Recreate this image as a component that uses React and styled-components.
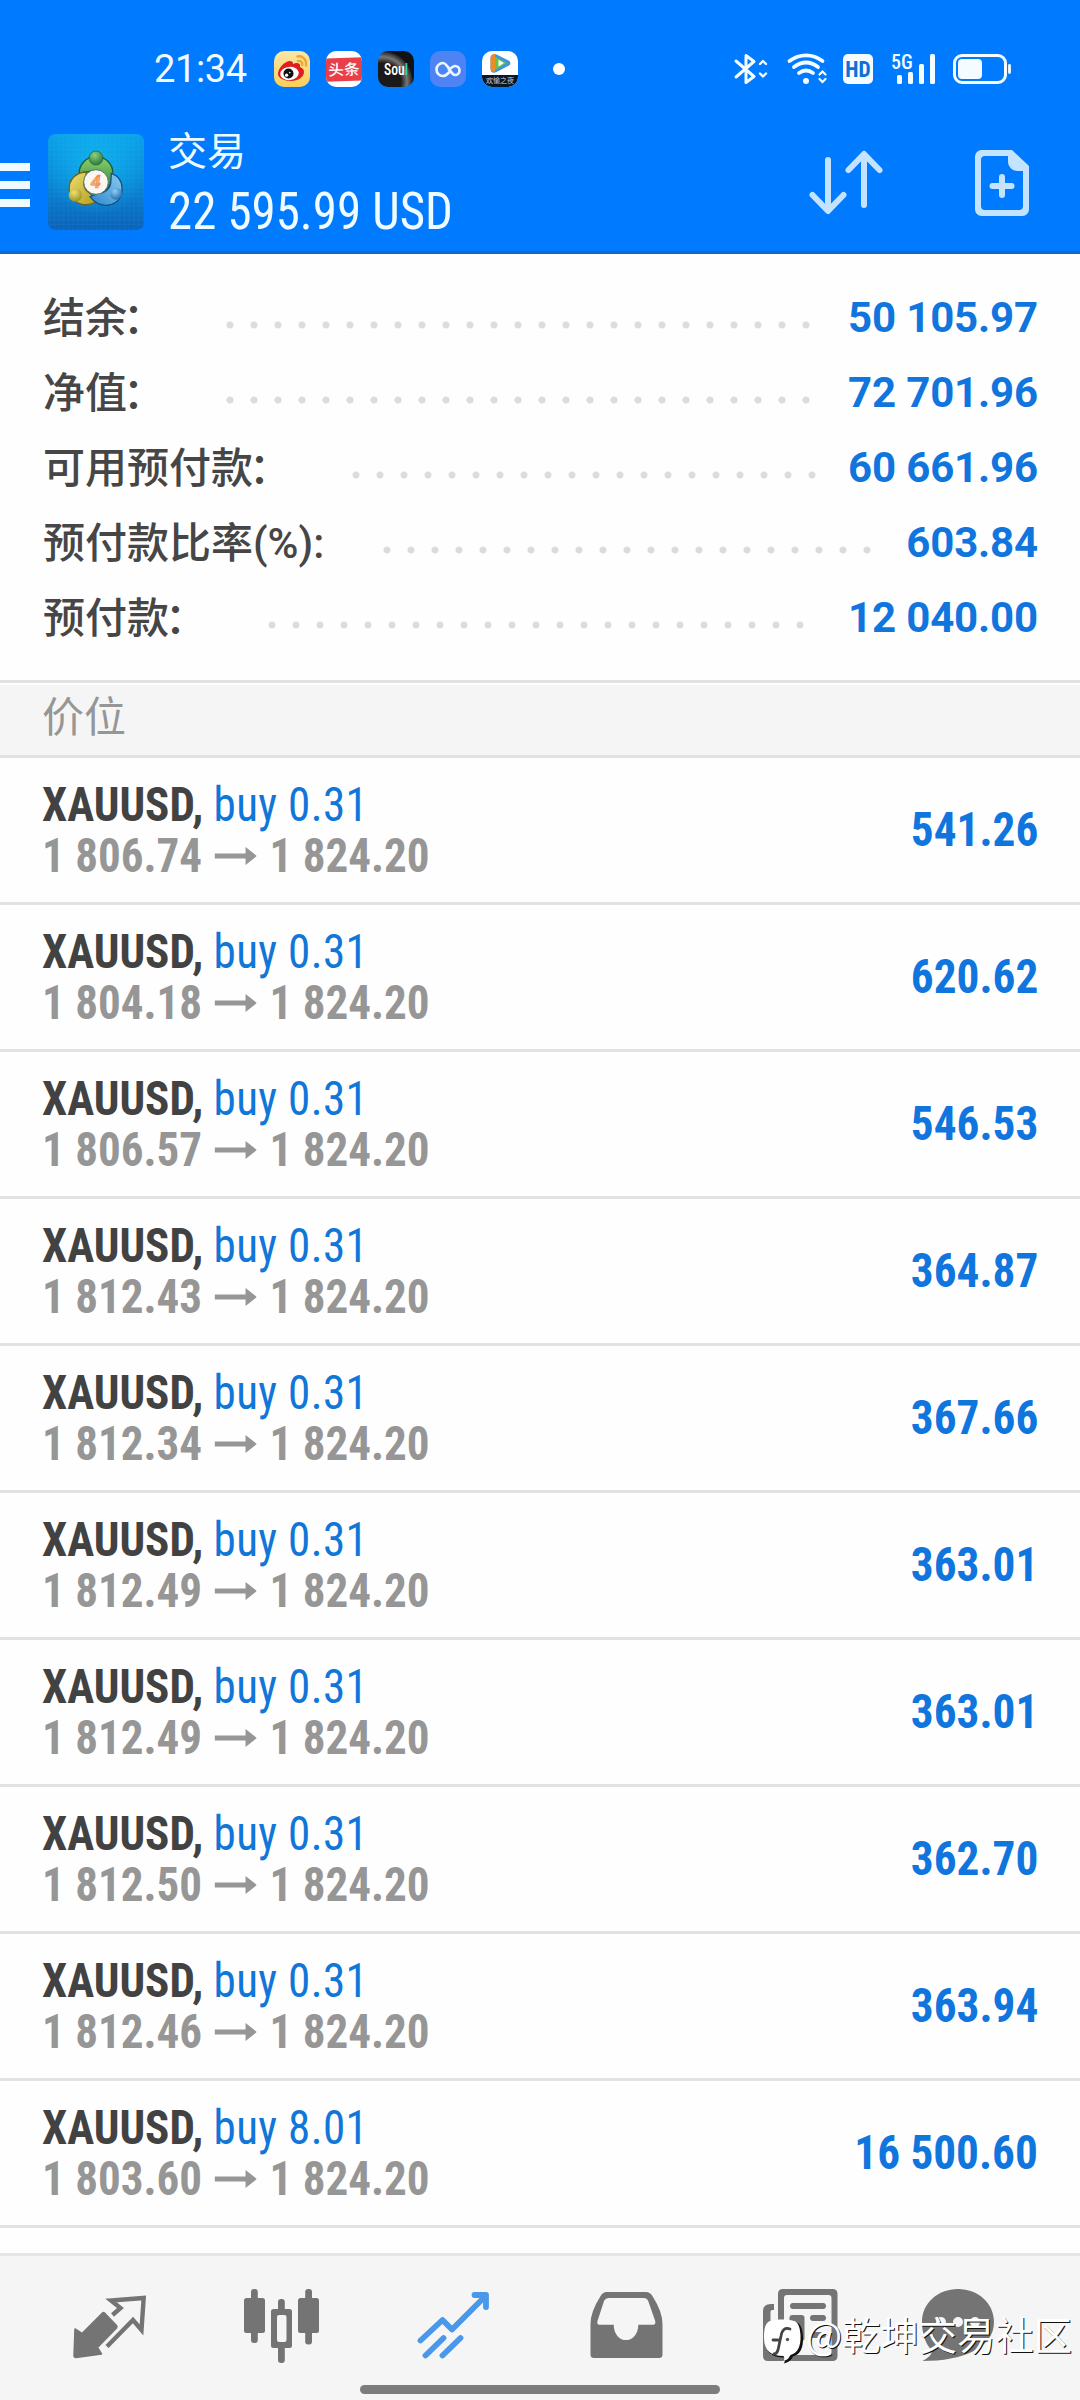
import React from "react";
import styled, { createGlobalStyle } from "styled-components";

const GlobalStyle = createGlobalStyle`
  body { margin: 0; background: #fefefe; font-family: Roboto, "Noto Sans CJK SC", sans-serif; }
  svg { display: block; flex: none; }
`;

const Screen = styled.div`
  position: relative;
  width: 1080px;
  height: 2400px;
  display: flex;
  flex-direction: column;
  overflow: hidden;
  background: #fefefe;
`;

/* ---------- header ---------- */

const Header = styled.header`
  box-sizing: border-box;
  height: 254px;
  flex: none;
  background: #007aff;
  border-bottom: 3px solid #0c69d3;
  color: #f0fbff;
`;

const StatusBar = styled.div`
  box-sizing: border-box;
  height: 121px;
  padding: 45px 68px 28px 154px;
  display: flex;
  align-items: center;
`;

const Clock = styled.div`
  width: 120px;
  font-size: 38px;
  line-height: 48px;
  letter-spacing: -0.4px;
`;

const AppIcons = styled.div`
  display: flex;
  align-items: center;
  gap: 16px;
`;

const AppIcon = styled.div`
  width: 36px;
  height: 36px;
  border-radius: 10px;
  overflow: hidden;
  background: ${(p) => p.$bg};
  display: flex;
  flex-direction: column;
  align-items: center;
  justify-content: ${(p) => p.$justify || "center"};
`;

const HeadlineBand = styled.div`
  width: 36px;
  height: 23px;
  background: #e8404a;
  color: #fff;
  font: 500 15px/21px "Noto Sans CJK SC", sans-serif;
  text-align: center;
  white-space: nowrap;
  transform: rotate(-2deg) scaleX(1.04);
`;

const SoulText = styled.div`
  font-size: 17px;
  line-height: 36px;
  font-weight: 500;
  font-stretch: 75%;
  color: #fff;
  white-space: nowrap;
  transform: scaleX(0.8);
  span { color: #35d6b4; }
`;

const VideoLabel = styled.div`
  width: 36px;
  height: 12px;
  background: #0b1626;
  color: #c9ced6;
  font: 400 7px/11px "Noto Sans CJK SC", sans-serif;
  text-align: center;
`;

const MoreDot = styled.div`
  width: 12px;
  height: 12px;
  margin-left: 35px;
  border-radius: 50%;
  background: #fff;
`;

const StatusIcons = styled.div`
  margin-left: auto;
  height: 36px;
  display: flex;
`;

const AppBar = styled.div`
  height: 120px;
  padding-top: 1px;
  display: flex;
  align-items: center;
`;

const MenuButton = styled.div`
  width: 48px;
  height: 44px;
  margin-top: 5px;
  display: flex;
  flex-direction: column;
  justify-content: space-between;
`;

const MenuBar = styled.div`
  width: 30px;
  height: 8px;
  background: #f0fbff;
`;

const TitleBlock = styled.div`
  width: 582px;
  margin-left: 24px;
`;

const PageName = styled.div`
  font-size: 39px;
  line-height: 60px;
`;

const Equity = styled.div`
  font-size: 52px;
  line-height: 60px;
  font-stretch: 75%;
  white-space: nowrap;
  transform: scaleX(0.94);
  transform-origin: left;
`;

/* ---------- account summary ---------- */

const Summary = styled.section`
  box-sizing: border-box;
  height: 426px;
  flex: none;
  padding: 26px 42px 0 43px;
`;

const SummaryRow = styled.div`
  height: 75px;
  display: flex;
  align-items: center;
`;

const SummaryLabel = styled.div`
  font-size: 42px;
  line-height: 75px;
  font-weight: 500;
  color: #464646;
  padding-top: 2px;
`;

const WideColon = styled.span`
  margin: 0 4px 0 -4px;
`;

const Leader = styled.div`
  width: ${(p) => p.$dots * 24}px;
  height: 8px;
  margin: 15px 0 0 ${(p) => p.$gap || 49}px;
  background: radial-gradient(circle at center, #dcdcdc 3px, transparent 4px) repeat-x left center / 24px 8px;
`;

const SummaryValue = styled.div`
  margin-left: auto;
  font-size: 42px;
  line-height: 75px;
  font-weight: 700;
  letter-spacing: -0.15px;
  color: #1076de;
`;

/* ---------- positions ---------- */

const SectionTitle = styled.div`
  box-sizing: border-box;
  height: 78px;
  flex: none;
  padding-left: 42px;
  border-top: 3px solid #e2e2e2;
  border-bottom: 3px solid #e2e2e2;
  background: #f5f5f5;
  box-shadow: inset 0 2px 0 #fefefe;
  font-size: 42px;
  line-height: 69px;
  color: #969696;
`;

const PositionList = styled.div`
  flex: 1;
`;

const PositionRow = styled.div`
  box-sizing: border-box;
  height: 147px;
  padding: 0 42px;
  border-bottom: 3px solid #e2e2e2;
  display: flex;
  align-items: center;
  justify-content: space-between;
  font-size: 48px;
  line-height: 51px;
  font-weight: 700;
  font-stretch: 75%;
  white-space: nowrap;
`;

const Deal = styled.div`
  transform: scaleX(0.938);
  transform-origin: left;
`;

const DealName = styled.div`
  color: #424242;
`;

const DealSide = styled.span`
  font-weight: 400;
  letter-spacing: 0.4px;
  color: #1076d8;
`;

const DealPrices = styled.div`
  display: flex;
  align-items: center;
  color: #969696;
`;

const Profit = styled.div`
  padding-bottom: 2px;
  color: #1076de;
  transform: scaleX(0.942);
  transform-origin: right;
`;

/* ---------- bottom bar ---------- */

const TabBar = styled.nav`
  box-sizing: border-box;
  height: 147px;
  flex: none;
  padding-left: 24px;
  border-top: 3px solid #e5e5e5;
  background: #f5f5f5;
  display: flex;
`;

const HomeIndicator = styled.div`
  position: absolute;
  left: 360px;
  bottom: 6px;
  width: 360px;
  height: 9px;
  border-radius: 5px;
  background: #7c7c7c;
`;

const Watermark = styled.div`
  position: absolute;
  left: 762px;
  top: 2311px;
  display: flex;
  align-items: flex-start;
`;

const WatermarkText = styled.div`
  margin-left: 1px;
  font: 400 38.3px/46px "Noto Sans CJK SC", sans-serif;
  color: #fff;
  text-shadow: 1px 1px 0 #111;
  white-space: nowrap;
`;

const summary = [
  { label: "结余", wide: true, value: "50 105.97", dots: 25 },
  { label: "净值", wide: true, value: "72 701.96", dots: 25 },
  { label: "可用预付款", wide: true, value: "60 661.96", dots: 20 },
  { label: "预付款比率(%):", value: "603.84", dots: 21, gap: 51 },
  { label: "预付款", wide: true, value: "12 040.00", dots: 23 },
];

const positions = [
  ["0.31", "1 806.74", "541.26"],
  ["0.31", "1 804.18", "620.62"],
  ["0.31", "1 806.57", "546.53"],
  ["0.31", "1 812.43", "364.87"],
  ["0.31", "1 812.34", "367.66"],
  ["0.31", "1 812.49", "363.01"],
  ["0.31", "1 812.49", "363.01"],
  ["0.31", "1 812.50", "362.70"],
  ["0.31", "1 812.46", "363.94"],
  ["8.01", "1 803.60", "16 500.60"],
];

const WeiboIcon = () => (
  <svg width="36" height="36" viewBox="0 0 36 36">
    <path d="M4 23c0-6 7-13 12-13 2 0 3 1 3 3 4-2 8-1 7 3 3 1 4 3 4 5 0 5-6 9-13 9S4 27 4 23z" fill="#e01e20" />
    <ellipse cx="15.5" cy="22.5" rx="9.3" ry="6.6" fill="#fff" transform="rotate(-6 15.5 22.5)" />
    <circle cx="14.5" cy="22.5" r="5" fill="#111" />
    <circle cx="12.6" cy="24.2" r="1.6" fill="#fff" />
    <circle cx="15.8" cy="21.6" r=".8" fill="#fff" />
    <path d="M23.5 5.5c5-1 9.500 3 8.500 9M24 10c3-.5 4.800 1.500 4.300 4" fill="none" stroke="#eda72e" strokeWidth="2.400" strokeLinecap="round" />
  </svg>
);

const LoopIcon = () => (
  <svg width="36" height="36" viewBox="0 0 36 36">
    <path d="M19 21.500c-2 2-3.500 3.500-6 3.500a6.500 6.500 0 1 1 0-13c5 0 7.500 12 12 12a4.500 4.500 0 0 0 0-9c-2.500 0-4 2-6 4" fill="none" stroke="#eaf6ff" strokeWidth="2.700" strokeLinecap="round" />
  </svg>
);

const PlayIcon = () => (
  <svg width="28" height="24" viewBox="0 0 28 24">
    <path d="M4.500 7.500c0-4 2.500-5 6-4l12 6c2.500 1.300 2.500 4 0 5.300l-12 6.200c-3.500 1.500-6 .5-6-3.500z" fill="#3a97d8" />
    <path d="M4.500 7.500c0-3 1.500-4.500 4.500-4.500v18c-3 0-4.500-1.500-4.500-4z" fill="#f08a24" />
    <path d="M9 5.500l11.500 6.500L9 19z" fill="#6cc04a" />
    <path d="M12.500 8.800l5.500 3.300-5.500 3.400z" fill="#fff" />
  </svg>
);

const SoulBackdrop = "radial-gradient(circle at 12% 85%, #1a1a1a 0 42%, #777 56%, #333 66%, transparent 70%), #101214";

const SystemIcons = () => (
  <svg width="280" height="36" viewBox="732 51 280 36" fill="none" stroke="#f4fcff">
    <g strokeWidth="3" strokeLinejoin="round" strokeLinecap="round">
      <path d="M736 61l18 15.500-8 6V55.500l8 6L736 77" />
      <path d="M760 64l3-3 3 3M760 73.500l3 3 3-3" strokeWidth="2.400" />
    </g>
    <g strokeWidth="3.800" strokeLinecap="round">
      <path d="M789.500 61c10-7.500 23-7.500 33 0M794 67c8-6 16-6 24 0" />
      <path d="M799 73c5-3.500 9-3.500 14 0" />
      <circle cx="806" cy="81" r="3" fill="#f4fcff" stroke="none" />
      <path d="M819.500 74.500l3-3 3 3M819.500 79l3 3 3-3" strokeWidth="2.200" />
    </g>
    <rect x="843" y="54" width="30" height="30" rx="5" fill="#f4fcff" stroke="none" />
    <text x="858" y="76.500" textAnchor="middle" fontFamily="Roboto" fontWeight="700" fontSize="21.500" style={{ fontStretch: "75%" }} fill="#0c6fdc" stroke="none">HD</text>
    <text x="891" y="69" fontFamily="Roboto" fontWeight="500" fontSize="20" style={{ fontStretch: "75%" }} fill="#f4fcff" stroke="none">5G</text>
    <g fill="#f4fcff" stroke="none">
      <rect x="897" y="75" width="5" height="9" rx="1.500" />
      <rect x="908" y="72" width="5" height="12" rx="1.500" />
      <rect x="919" y="64" width="5" height="20" rx="1.500" />
      <rect x="930" y="54" width="5" height="30" rx="1.500" />
    </g>
    <rect x="954.500" y="55.500" width="51" height="27" rx="7.500" strokeWidth="3" />
    <rect x="958" y="59" width="24" height="20" rx="4" fill="#f4fcff" stroke="none" />
    <path d="M1009.500 65.500v7" strokeWidth="2.800" strokeLinecap="round" />
  </svg>
);

const PlatformLogo = () => (
  <svg width="96" height="96" viewBox="24 24 288 288">
    <defs>
      <linearGradient id="tile" x1="0" y1="0" x2="0" y2="1">
        <stop offset="0" stopColor="#0aa0ea" />
        <stop offset=".5" stopColor="#0a86d4" />
        <stop offset="1" stopColor="#0b62b8" />
      </linearGradient>
      <radialGradient id="glow" cx=".5" cy=".3" r=".55">
        <stop offset="0" stopColor="#10b8f0" stopOpacity=".8" />
        <stop offset="1" stopColor="#10b8f0" stopOpacity="0" />
      </radialGradient>
      <pattern id="mesh" width="14" height="14" patternUnits="userSpaceOnUse">
        <path d="M0 0H14M0 0V14" stroke="#5cc8f4" strokeOpacity=".18" strokeWidth="2" />
      </pattern>
      <linearGradient id="armG" x1="0" y1="0" x2="0" y2="1"><stop offset="0" stopColor="#8fd070" /><stop offset="1" stopColor="#2f8a3c" /></linearGradient>
      <linearGradient id="armY" x1="0" y1="0" x2="1" y2="1"><stop offset="0" stopColor="#efe070" /><stop offset="1" stopColor="#b39a20" /></linearGradient>
      <linearGradient id="armB" x1="1" y1="0" x2="0" y2="1"><stop offset="0" stopColor="#8cccf2" /><stop offset="1" stopColor="#2a86cc" /></linearGradient>
      <radialGradient id="ballG" cx=".4" cy=".3" r=".8"><stop offset="0" stopColor="#8fd07c" /><stop offset="1" stopColor="#1d6f38" /></radialGradient>
      <radialGradient id="ballY" cx=".4" cy=".3" r=".8"><stop offset="0" stopColor="#f0e070" /><stop offset="1" stopColor="#8f8a1c" /></radialGradient>
      <radialGradient id="ballB" cx=".4" cy=".3" r=".8"><stop offset="0" stopColor="#8cd0f4" /><stop offset="1" stopColor="#1b62a8" /></radialGradient>
    </defs>
    <rect x="24" y="24" width="288" height="288" rx="22" fill="url(#tile)" />
    <rect x="24" y="24" width="288" height="288" rx="22" fill="url(#glow)" />
    <rect x="24" y="24" width="288" height="288" rx="22" fill="url(#mesh)" />
    <g strokeWidth="4">
      <path d="M118 146c-4-30 22-54 50-54s54 22 50 56c-2 18-6 30-14 38l-18-10c6-22 2-36-16-40-20-2-38 2-52 10z" fill="url(#armG)" stroke="#1f5a34" />
      <path d="M140 138c-32 0-56 24-52 56 2 26 26 44 56 42 12 0 18-4 26-10l-20-24c-16-8-22-24-16-40z" fill="url(#armY)" stroke="#6a6420" />
      <path d="M214 142c22 8 34 28 32 54-2 26-24 42-48 42-20 0-36-10-48-26l24-10c16 2 34-10 38-30z" fill="url(#armB)" stroke="#174f8a" />
    </g>
    <circle cx="168" cy="96" r="21" fill="url(#ballG)" stroke="#1e6030" strokeWidth="2" />
    <circle cx="106" cy="207" r="20" fill="url(#ballY)" />
    <circle cx="228" cy="203" r="18" fill="url(#ballB)" />
    <circle cx="168" cy="168" r="37" fill="#fbf6f2" stroke="#4c7858" strokeWidth="3" />
    <text x="167" y="187" textAnchor="middle" fontFamily="Roboto" fontWeight="700" fontStyle="italic" fontSize="54" fill="#f6b27a" stroke="#ec8a4c" strokeWidth="2">4</text>
  </svg>
);

const HeaderActions = () => (
  <svg width="330" height="120" viewBox="750 121 330 120" fill="none" stroke="#c3e3ff" strokeWidth="6" strokeLinecap="round" strokeLinejoin="round">
    <path d="M828 159v50M812.500 194l15.500 16 15.500-16M864 204v-48M848.500 169l15.500-16 15.500 16" />
    <path d="M981.500 149H1012l17 16v43.500a6.500 6.500 0 0 1-6.500 6.500h-41a6.500 6.500 0 0 1-6.500-6.500v-53a6.500 6.500 0 0 1 6.500-6.500zM985 155a4 4 0 0 0-4 4v46a4 4 0 0 0 4 4h34a4 4 0 0 0 4-4v-35h-6a9 9 0 0 1-9-9v-6z" fill="#c3e3ff" fillRule="evenodd" stroke="none" />
    <path d="M1002 176v18M992.500 185h19" />
  </svg>
);

const PriceArrow = styled.svg`
  margin: 0 13.5px;
`;

const TabIcon = ({ index, width = 172, children }) => (
  <svg width={width} height="144" viewBox={`${24 + 172 * index} 2256 ${width} 144`} fill="#747474" stroke="none">
    {children}
  </svg>
);

export default function App() {
  return (
    <Screen>
      <GlobalStyle />
      <Header>
        <StatusBar>
          <Clock>21:34</Clock>
          <AppIcons>
            <AppIcon $bg="linear-gradient(#fbe6a8,#f9cf58)"><WeiboIcon /></AppIcon>
            <AppIcon $bg="#fff"><HeadlineBand>头条</HeadlineBand></AppIcon>
            <AppIcon $bg={SoulBackdrop}><SoulText>Sou<span>l</span></SoulText></AppIcon>
            <AppIcon $bg="#4d83f3"><LoopIcon /></AppIcon>
            <AppIcon $bg="#fff" $justify="flex-end"><PlayIcon /><VideoLabel>欢愉之夜</VideoLabel></AppIcon>
          </AppIcons>
          <MoreDot />
          <StatusIcons><SystemIcons /></StatusIcons>
        </StatusBar>
        <AppBar>
          <MenuButton><MenuBar /><MenuBar /><MenuBar /></MenuButton>
          <PlatformLogo />
          <TitleBlock>
            <PageName>交易</PageName>
            <Equity>22 595.99 USD</Equity>
          </TitleBlock>
          <HeaderActions />
        </AppBar>
      </Header>

      <Summary>
        {summary.map((s) => (
          <SummaryRow key={s.label}>
            <SummaryLabel>{s.label}{s.wide && <WideColon>：</WideColon>}</SummaryLabel>
            <Leader $dots={s.dots} $gap={s.gap} />
            <SummaryValue>{s.value}</SummaryValue>
          </SummaryRow>
        ))}
      </Summary>

      <SectionTitle>价位</SectionTitle>
      <PositionList>
        {positions.map(([lots, open, profit], i) => (
          <PositionRow key={i}>
            <Deal>
              <DealName>XAUUSD, <DealSide>buy {lots}</DealSide></DealName>
              <DealPrices>
                <span>{open}</span>
                <PriceArrow width="45" height="18" viewBox="0 0 45 18" fill="#969696">
                  <path d="M0 6.500h33V0l12 9-12 9v-6.500H0z" />
                </PriceArrow>
                <span>1 824.20</span>
              </DealPrices>
            </Deal>
            <Profit>{profit}</Profit>
          </PositionRow>
        ))}
      </PositionList>

      <TabBar>
        <TabIcon index={0}>
          <path d="M75 2329l7 4.500 20.500-20.500q1-1 2 0l12 12.500q1 1 0 2.500l-19 19.500 4 6.500-25.500 3.500q-2 0-2-2z" stroke="#747474" strokeWidth="1.500" strokeLinejoin="round" />
          <path d="M112.500 2315l8-7-9.500-7.500 32.700-2.500-2.200 32-8.500-10-26 26.500" fill="none" stroke="#747474" strokeWidth="4.400" strokeLinejoin="miter" />
        </TabIcon>
        <TabIcon index={1}>
          <rect x="251" y="2289" width="6.800" height="54" rx="3" />
          <rect x="244" y="2298" width="21" height="35" rx="2.500" />
          <rect x="278" y="2299" width="6.800" height="14" rx="3" />
          <rect x="278" y="2345" width="6.800" height="18" rx="3" />
          <path d="M273.500 2309h16a2.500 2.500 0 0 1 2.500 2.500v34a2.500 2.500 0 0 1-2.500 2.500h-16a2.500 2.500 0 0 1-2.500-2.500v-34a2.500 2.500 0 0 1 2.500-2.500zM279 2315a2 2 0 0 0-2 2v23a2 2 0 0 0 2 2h5.500a2 2 0 0 0 2-2v-23a2 2 0 0 0-2-2z" fillRule="evenodd" />
          <rect x="305.200" y="2289" width="6.800" height="55.500" rx="3" />
          <rect x="298" y="2298" width="21" height="35" rx="2.500" />
        </TabIcon>
        <TabIcon index={2}>
          <g fill="none" stroke="#4a98e9" strokeWidth="5.800" strokeLinecap="round" strokeLinejoin="round">
            <path d="M420.500 2340.500l22-20.500 9.500 9.500 33-33M474.500 2295h11.500v12M425.500 2355.500l18-17.500M442.500 2355.500l18-17.500" />
          </g>
        </TabIcon>
        <TabIcon index={3}>
          <path d="M607 2292h38.500q5 0 7.500 5 9.500 15 9.500 27v30.500q0 3.500-3.500 3.500h-65q-3.500 0-3.500-3.500V2324q0-12 9.500-27 2.500-5 7-5zM609 2298q-3.500 0-5 3l-6.500 20q-1 3.700 2 3.700h14.200c.3 20.500 24.300 20.500 24.600 0h14.700q3 0 2.200-3.700l-7-20q-1.200-3-4.500-3z" fillRule="evenodd" />
        </TabIcon>
        <TabIcon index={4} width={144}>
          <path d="M783 2289h49.500q5 0 5 5v62q0 5-5 5h-64.500q-5 0-5-5v-45q0-7 8-7h3v6h-2q-1.500 0-1.500 2v41q0 2 1.500 2h6V2294q0-5 5-5zM787 2295q-3 0-3 3v57h45q2.500 0 2.500-3v-54q0-3-3-3z" fillRule="evenodd" />
          <rect x="790" y="2303" width="36" height="6" rx="3" />
          <rect x="789.500" y="2315" width="15" height="26" rx="3" />
          <rect x="810" y="2315" width="16" height="6" rx="3" />
          <rect x="810" y="2332" width="16" height="6" rx="3" />
        </TabIcon>
        <svg width="144" height="144" viewBox="856 2256 144 144" fill="#747474">
          <path d="M958 2289c20 0 36 14 36 33 0 26-31 39-71.500 39 6-3 10-7 9-11-6-6-9.500-17-9.500-28 0-19 16-33 36-33z" />
          <g fill="#f5f5f5"><circle cx="941" cy="2322" r="5" /><circle cx="958" cy="2322" r="5" /><circle cx="975" cy="2322" r="5" /></g>
        </svg>
      </TabBar>

      <Watermark>
        <svg width="43" height="54" viewBox="762 2311 43 54">
          <path d="M770 2322c8-2 18-2 26 0 4 1 6 6 6.500 14 .500 12-3 18-10 20-2 4-5 6-9 7 1-2 1-4 0-6-12 0-19-5-19-18 0-10 1-15.500 5.500-17z" fill="#111" transform="translate(.5 .5)" />
          <path d="M770 2321c8-2 17-2 24 0 4 1 6 6 6.500 14 .500 12-3 18-10 20-2 4-4 5-7 6 1-2 1-3 0-5-12 0-19.500-5-19.500-18 0-10 1.500-15.500 6-17z" fill="#fff" />
          <path d="M790 2329c-5-2-8 1-9 7l-3 14c-1 3-2 4-4 4M773 2340h5" fill="none" stroke="#444" strokeWidth="2.800" strokeLinecap="round" />
          <circle cx="787.500" cy="2339.500" r="1.700" fill="#555" />
        </svg>
        <WatermarkText>@乾坤交易社区</WatermarkText>
      </Watermark>
      <HomeIndicator />
    </Screen>
  );
}
